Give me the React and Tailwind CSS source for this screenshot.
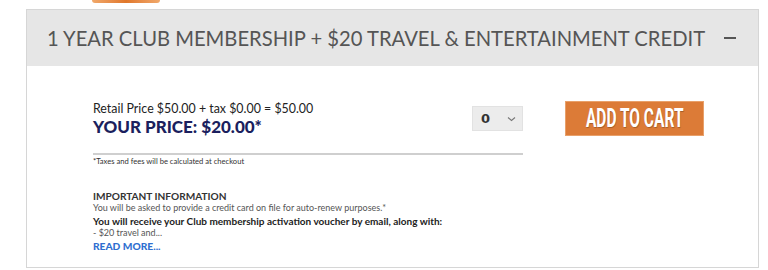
import React from "react";

const lato = { fontFamily: "Lato, 'Open Sans', sans-serif" };

function QtySelect() {
  return (
    <div className="flex h-[25px] w-[51px] items-center justify-between border border-[#e2e2e2] bg-[#ececec] pl-[8px] pr-[6px]">
      <span className="text-[13px] font-bold text-[#333]" style={{ fontFamily: "'DejaVu Sans', sans-serif" }}>
        0
      </span>
      <svg width="9" height="6" viewBox="0 0 9 6" fill="none">
        <path d="M1 1.5 L4.5 4.5 L8 1.5" stroke="#777" strokeWidth="1.1" />
      </svg>
    </div>
  );
}

export default function App() {
  return (
    <div className="h-[270px] w-[768px] overflow-hidden bg-white" style={lato}>
      <div className="ml-[92px] h-[3px] w-[68px] rounded-b-full bg-gradient-to-r from-[#f0a86a] via-[#e0772a] to-[#f0a86a]" />
      <div className="ml-[26px] mt-[6px] w-[733px] border border-[#d6d6d6]">
        <div className="flex h-[56px] items-center justify-between bg-[#e6e6e6] pl-[20px] pr-[22px]">
          <h2 className="whitespace-nowrap text-[20.2px] text-[#555]">
            1 YEAR CLUB MEMBERSHIP + $20 TRAVEL &amp; ENTERTAINMENT CREDIT
          </h2>
          <span className="block h-[2px] w-[12px] bg-[#555]" />
        </div>

        <div className="flex pl-[66px] pt-[35px] pb-[14px]">
          <div className="w-[430px]">
            <div className="flex items-start justify-between">
              <div>
                <p className="text-[12.4px] leading-[15px] text-[#222]">
                  Retail Price $50.00 + tax $0.00 = $50.00
                </p>
                <p className="text-[17px] font-black leading-[21px] text-[#1b1f5e]">
                  YOUR PRICE: $20.00*
                </p>
              </div>
              <div className="mt-[5px]">
                <QtySelect />
              </div>
            </div>
            <div className="mt-[16px] h-[1.5px] bg-[#cfcfcf]" />
            <p className="mt-[1px] text-[7.6px] text-[#333]">
              *Taxes and fees will be calculated at checkout
            </p>
            <div className="mt-[23px] text-[9px] leading-[12.5px]">
              <p className="text-[10.1px] font-bold text-[#333]">IMPORTANT INFORMATION</p>
              <p className="text-[#555]">
                You will be asked to provide a credit card on file for auto-renew purposes.*
              </p>
              <p className="text-[10px] font-bold text-[#222]">
                You will receive your Club membership activation voucher by email, along with:
              </p>
              <p className="text-[#555]">- $20 travel and...</p>
              <a className="text-[10.2px] font-black text-[#2f6fd0]">READ MORE...</a>
            </div>
          </div>
          <div className="ml-[43px] mt-[1px]">
            <button className="flex h-[33px] w-[137px] items-center justify-center overflow-hidden bg-[#dc7b37] shadow-[0_0_0_1px_#e8a06a]">
              <span
                className="inline-block scale-x-[0.62] whitespace-nowrap text-[25px] font-bold leading-none text-white"
                style={{ fontFamily: "Roboto, sans-serif", textShadow: "1px 1px 1px rgba(0,0,0,0.25)" }}
              >
                ADD TO CART
              </span>
            </button>
          </div>
        </div>
      </div>
    </div>
  );
}
